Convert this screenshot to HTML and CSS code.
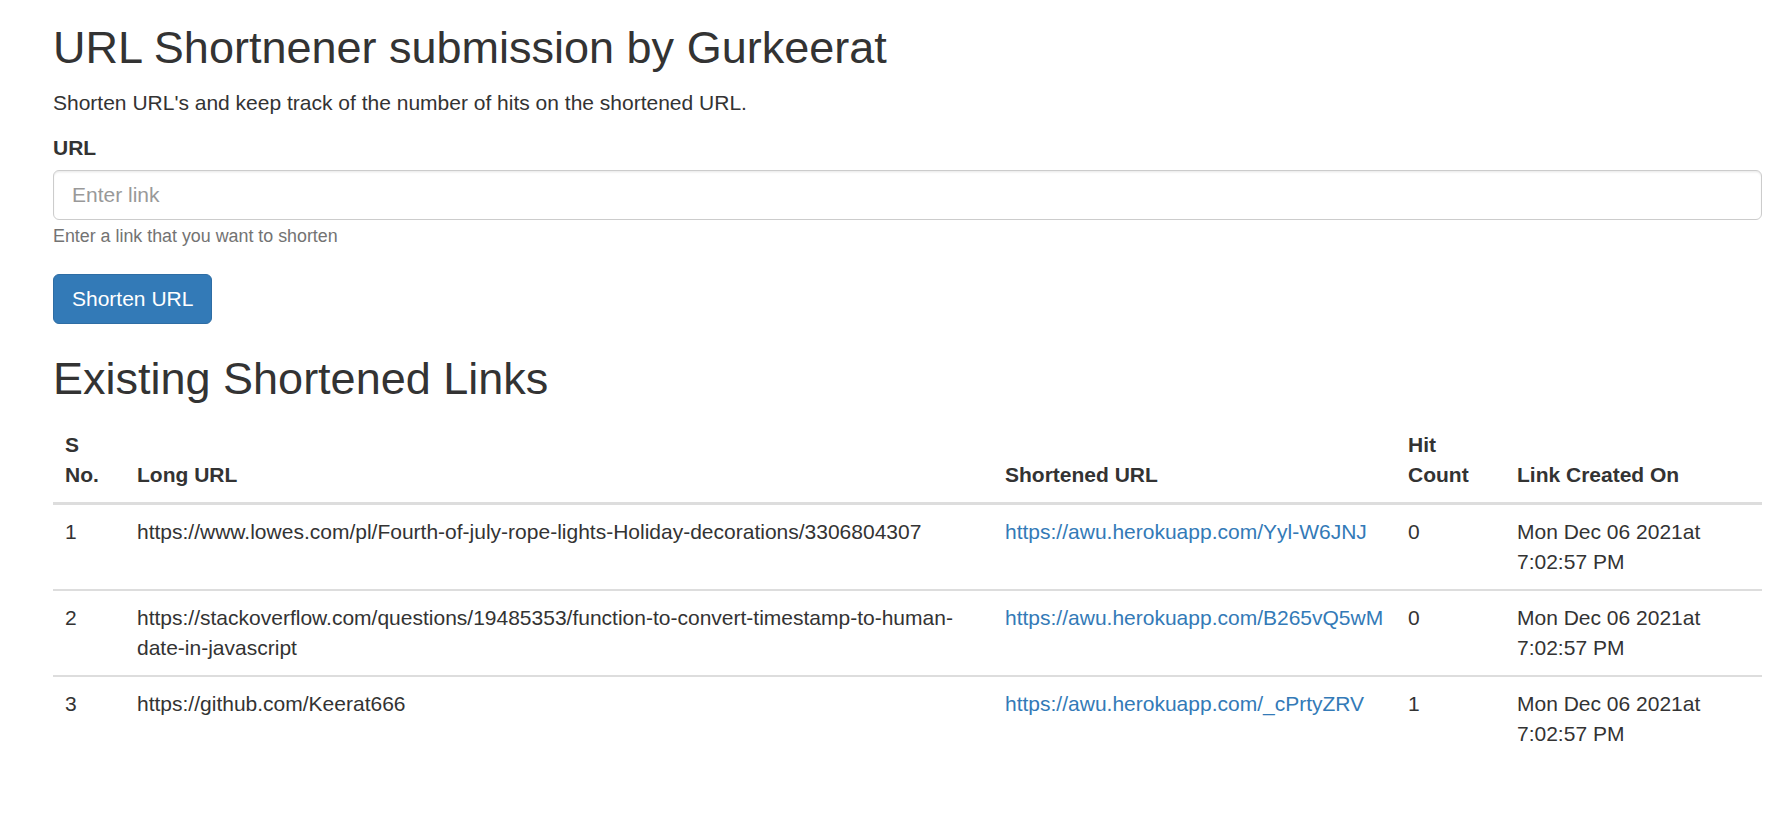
FILE: index.html
```html
<!DOCTYPE html>
<html lang="en">
<head>
<meta charset="utf-8">
<title>URL Shortnener</title>
<link rel="stylesheet" href="styles.css">
</head>
<body>
<div class="page">
  <h2 class="title">URL Shortnener submission by Gurkeerat</h2>
  <p class="lead-text">Shorten URL's and keep track of the number of hits on the shortened URL.</p>
  <form class="form">
    <div class="form-group">
      <label class="label" for="url">URL</label>
      <input class="input" id="url" type="text" placeholder="Enter link">
      <small class="help">Enter a link that you want to shorten</small>
    </div>
    <button class="btn" type="button">Shorten URL</button>
  </form>
  <h2 class="title section">Existing Shortened Links</h2>
  <table class="table">
    <colgroup>
      <col class="c-no">
      <col class="c-long">
      <col class="c-short">
      <col class="c-hit">
      <col class="c-date">
    </colgroup>
    <thead>
      <tr>
        <th>S No.</th>
        <th>Long URL</th>
        <th>Shortened URL</th>
        <th>Hit Count</th>
        <th>Link Created On</th>
      </tr>
    </thead>
    <tbody>
      <tr>
        <td>1</td>
        <td>https://www.lowes.com/pl/Fourth-of-july-rope-lights-Holiday-decorations/3306804307</td>
        <td><a class="link" href="#">https://awu.herokuapp.com/Yyl-W6JNJ</a></td>
        <td>0</td>
        <td>Mon Dec 06 2021at 7:02:57 PM</td>
      </tr>
      <tr>
        <td>2</td>
        <td>https://stackoverflow.com/questions/19485353/function-to-convert-timestamp-to-human-date-in-javascript</td>
        <td><a class="link" href="#">https://awu.herokuapp.com/B265vQ5wM</a></td>
        <td>0</td>
        <td>Mon Dec 06 2021at 7:02:57 PM</td>
      </tr>
      <tr>
        <td>3</td>
        <td>https://github.com/Keerat666</td>
        <td><a class="link" href="#">https://awu.herokuapp.com/_cPrtyZRV</a></td>
        <td>1</td>
        <td>Mon Dec 06 2021at 7:02:57 PM</td>
      </tr>
    </tbody>
  </table>
</div>
</body>
</html>
```

FILE: styles.css
```css
* { box-sizing: border-box; }

html, body {
  margin: 0;
  padding: 0;
  background: #fff;
}

body {
  font-family: "Liberation Sans", Arial, Helvetica, sans-serif;
  font-size: 21px;
  line-height: 30px;
  color: #333;
}

.page {
  padding: 0 12px 40px 53px;
}

.title {
  font-size: 45px;
  line-height: 49.5px;
  font-weight: normal;
  margin: 23px 0 15px;
  color: #333;
}

.title.section {
  margin-top: 30px;
}

.lead-text {
  margin: 0 0 15px;
}

.form {
  margin: 0;
}

.form-group {
  margin-bottom: 24.5px;
}

.label {
  display: inline-block;
  font-weight: bold;
  margin-bottom: 7.5px;
}

.input {
  display: block;
  width: 100%;
  height: 50px;
  padding: 9px 18px;
  font-family: inherit;
  font-size: 21px;
  line-height: 30px;
  color: #555;
  background: #fff;
  border: 1px solid #ccc;
  border-radius: 6px;
  box-shadow: inset 0 1.5px 1.5px rgba(0, 0, 0, 0.075);
  outline: none;
}

.input::placeholder {
  color: #999;
}

.help {
  display: block;
  margin-top: 3.7px;
  font-size: 17.85px;
  line-height: 25.5px;
  color: #737373;
}

.btn {
  display: inline-block;
  height: 50px;
  padding: 8.5px 18px;
  font-family: inherit;
  font-size: 21px;
  line-height: 30px;
  color: #fff;
  background: #337ab7;
  border: 1px solid #2e6da4;
  border-radius: 6px;
  cursor: pointer;
}

.table {
  width: 100%;
  margin-top: 1.5px;
  table-layout: fixed;
  border-collapse: collapse;
  border-spacing: 0;
}

.c-no { width: 72px; }
.c-long { width: 868px; }
.c-short { width: 403px; }
.c-hit { width: 109px; }
.c-date { width: 257px; }

.table th,
.table td {
  padding: 12px;
  text-align: left;
  line-height: 30px;
}

.table th {
  font-weight: bold;
  vertical-align: bottom;
  border-bottom: 3px solid #ddd;
}

.table td {
  vertical-align: top;
  border-top: 2px solid #ddd;
}

.table tbody tr:first-child td {
  border-top: 0;
}

.link {
  color: #337ab7;
  text-decoration: none;
}
```
